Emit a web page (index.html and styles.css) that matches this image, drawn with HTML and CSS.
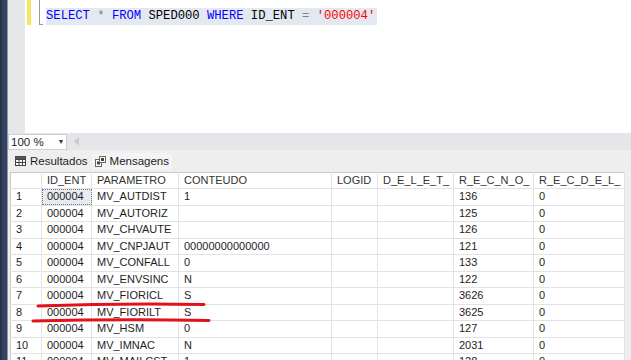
FILE: index.html
```html
<!DOCTYPE html>
<html lang="pt">
<head>
  <meta charset="UTF-8" />
  <title>SPED000 - Consulta</title>
  <link rel="stylesheet" href="styles.css">
</head>
<body>
  <div class="side"></div>
  <div class="main">
    <section class="editor">
      <div class="gutter"></div>
      <div class="marks">
        <span class="changed"></span>
        <span class="bracket"></span>
      </div>
      <div class="code">
        <span class="line"><span class="kw">SELECT</span> <span class="op">*</span> <span class="kw">FROM</span> SPED000 <span class="kw">WHERE</span> ID_ENT <span class="op">=</span> <span class="str">'000004'</span></span>
      </div>
    </section>

    <div class="zoombar">
      <div class="zoom-select">100 % <span class="caret">&#9662;</span></div>
      <svg class="scroll-left" width="6" height="9" viewBox="0 0 6 9"><path d="M5 0 L0 4.5 L5 9 Z" fill="#c9cad2"/></svg>
    </div>

    <div class="tabs">
      <div class="tab">
        <svg width="11" height="10" viewBox="0 0 11 10"><rect x="0.5" y="0.5" width="10" height="9" fill="#fff" stroke="#444"/><path d="M0.5 3.5 H10.5 M0.5 6.5 H10.5 M4 0.5 V9.5 M7.5 0.5 V9.5" stroke="#444"/><rect x="0.5" y="0.5" width="10" height="2.5" fill="#555"/></svg>
        Resultados
      </div>
      <div class="tab tab-alt">
        <svg width="11" height="11" viewBox="0 0 11 11"><rect x="0.5" y="3.5" width="6" height="7" fill="#fff" stroke="#666"/><rect x="2" y="5.5" width="3" height="3" fill="#444"/><rect x="4.5" y="0.5" width="6" height="6" fill="#fff" stroke="#666"/><rect x="6" y="2" width="3" height="3" fill="#444"/></svg>
        Mensagens
      </div>
    </div>

    <div class="results">
      <table class="grid">
        <colgroup>
          <col style="width:31px"><col style="width:50px"><col style="width:87px"><col style="width:153px">
          <col style="width:46px"><col style="width:76px"><col style="width:80px"><col style="width:91px">
        </colgroup>
        <thead>
          <tr>
            <th></th><th>ID_ENT</th><th>PARAMETRO</th><th>CONTEUDO</th><th>LOGID</th><th>D_E_L_E_T_</th><th>R_E_C_N_O_</th><th>R_E_C_D_E_L_</th>
          </tr>
        </thead>
        <tbody>
          <tr><td class="num">1</td><td class="focus">000004</td><td>MV_AUTDIST</td><td>1</td><td></td><td></td><td>136</td><td>0</td></tr>
          <tr><td class="num">2</td><td>000004</td><td>MV_AUTORIZ</td><td></td><td></td><td></td><td>125</td><td>0</td></tr>
          <tr><td class="num">3</td><td>000004</td><td>MV_CHVAUTE</td><td></td><td></td><td></td><td>126</td><td>0</td></tr>
          <tr><td class="num">4</td><td>000004</td><td>MV_CNPJAUT</td><td>00000000000000</td><td></td><td></td><td>121</td><td>0</td></tr>
          <tr><td class="num">5</td><td>000004</td><td>MV_CONFALL</td><td>0</td><td></td><td></td><td>133</td><td>0</td></tr>
          <tr><td class="num">6</td><td>000004</td><td>MV_ENVSINC</td><td>N</td><td></td><td></td><td>122</td><td>0</td></tr>
          <tr><td class="num">7</td><td>000004</td><td>MV_FIORICL</td><td>S</td><td></td><td></td><td>3626</td><td>0</td></tr>
          <tr><td class="num">8</td><td>000004</td><td>MV_FIORILT</td><td>S</td><td></td><td></td><td>3625</td><td>0</td></tr>
          <tr><td class="num">9</td><td>000004</td><td>MV_HSM</td><td>0</td><td></td><td></td><td>127</td><td>0</td></tr>
          <tr><td class="num">10</td><td>000004</td><td>MV_IMNAC</td><td>N</td><td></td><td></td><td>2031</td><td>0</td></tr>
          <tr><td class="num">11</td><td>000004</td><td>MV_MAILCST</td><td>1</td><td></td><td></td><td>128</td><td>0</td></tr>
        </tbody>
      </table>
    </div>
  </div>

  <!-- marcação vermelha feita à mão sobre a imagem -->
  <svg class="ink" width="631" height="360" viewBox="0 0 631 360">
    <path d="M38 306 Q120 303 204 304.5" />
    <path d="M33 321 Q120 319 209 320.5" />
  </svg>
</body>
</html>
```

FILE: styles.css
```css
:root {
  --navy: #34435f;
  --gutter: #e6e7e9;
  --bar: #e6e6ea;
  --tabs: #eeeeef;
  --line: #e3e3e3;
  --text: #1e1e1e;
}

html, body {
  margin: 0;
  width: 631px;
  height: 360px;
  overflow: hidden;
}

body {
  display: flex;
  font-family: 'Liberation Sans', Arial, sans-serif;
  font-size: 11px;
  color: var(--text);
  background: #fff;
  position: relative;
}

.side {
  width: 5px;
  flex: none;
  background: var(--navy);
  border-left: 2px solid #243149;
  border-right: 1px solid #8d97a8;
}

.main {
  flex: 1;
  display: flex;
  flex-direction: column;
  min-width: 0;
}

/* editor */
.editor {
  height: 133px;
  flex: none;
  display: flex;
  background: #fff;
}

.gutter {
  width: 17px;
  background: var(--gutter);
}

.marks {
  width: 21px;
  position: relative;
}

.changed {
  position: absolute;
  left: 2px;
  top: 0;
  width: 4px;
  height: 25px;
  background: #f7e463;
}

.bracket {
  position: absolute;
  left: 14px;
  top: 0;
  width: 3px;
  height: 24px;
  border-left: 1px solid #9a9a9a;
  border-bottom: 1px solid #9a9a9a;
}

.code {
  display: flex;
  align-items: flex-start;
  padding-top: 8px;
  font-family: 'Liberation Mono', 'DejaVu Sans Mono', monospace;
  font-size: 12.2px;
}

.line {
  background: #e4e9f1;
  line-height: 17px;
  padding-right: 2px;
  color: #000;
}

.kw { color: #0000ff; }
.op { color: #808080; }
.str { color: #ff0000; }

/* zoom bar */
.zoombar {
  height: 17px;
  flex: none;
  background: var(--bar);
  display: flex;
  align-items: center;
  gap: 7px;
}

.zoom-select {
  width: 59px;
  height: 16px;
  padding: 0 3px 0 2px;
  background: #fff;
  border: 1px solid #cccedb;
  box-sizing: border-box;
  display: flex;
  align-items: center;
  justify-content: space-between;
  font-size: 11.5px;
  color: #1e1e1e;
}

.caret {
  font-size: 8px;
  color: #333;
}

/* tabs */
.tabs {
  height: 22px;
  flex: none;
  background: var(--tabs);
  display: flex;
  align-items: center;
  padding-left: 4px;
}

.tab {
  display: flex;
  align-items: center;
  gap: 4px;
  padding: 0 3px;
  height: 17px;
  font-size: 11.5px;
  color: #1e1e1e;
}

.tab-alt {
  background: #f4f4f5;
  margin-left: 1px;
}

/* grid */
.results {
  flex: 1;
  background: var(--tabs);
  padding-left: 2px;
  overflow: hidden;
}

.grid {
  table-layout: fixed;
  border-collapse: collapse;
  width: 615px;
  background: #fff;
  border-top: 1px solid #c9c9c9;
  border-left: 1px solid #c9c9c9;
}

.grid th,
.grid td {
  height: 16.5px;
  padding: 0 0 0 5px;
  border-right: 1px solid var(--line);
  border-bottom: 1px solid var(--line);
  white-space: nowrap;
  overflow: hidden;
  text-align: left;
  font-weight: normal;
  line-height: 15px;
  box-sizing: border-box;
}

.grid th {
  height: 16px;
  color: #333;
}

.grid td.focus {
  background: #e8ecf2;
  outline: 1px dotted #7a7a7a;
  outline-offset: -1px;
}

/* red annotation */
.ink {
  position: absolute;
  left: 0;
  top: 0;
  pointer-events: none;
}

.ink path {
  fill: none;
  stroke: #e0121c;
  stroke-width: 3;
  stroke-linecap: round;
}
```
